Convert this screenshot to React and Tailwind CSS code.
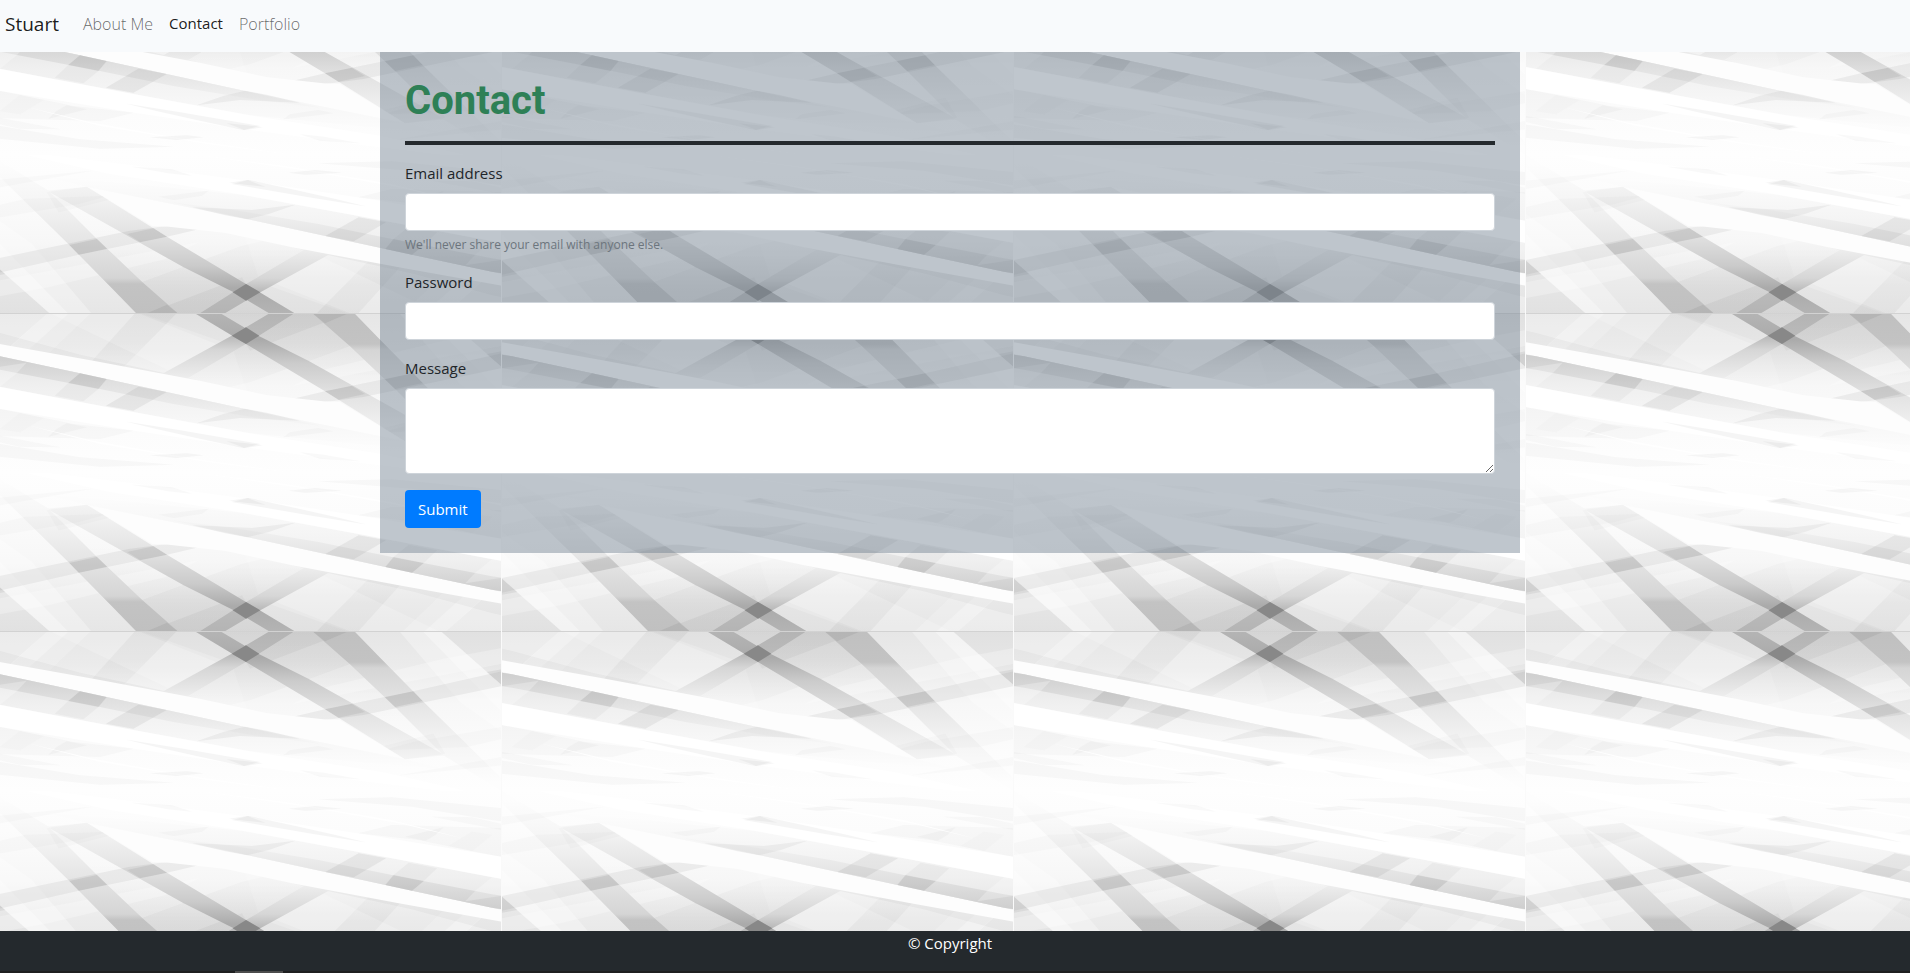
import React from "react";

// One half of the backdrop tile; the other half is the same drawing turned by 180 degrees.
function Facets() {
  return (
    <g clipPath="url(#half)">
      <rect x="-30" y="0" width="1536" height="479" fill="url(#base)" />
      {/* pale facets, left */}
      <path d="M-30 0H140L-30 155Z" fill="#fff" opacity=".2" />
      <path d="M140 0H270L90 170L-30 150Z" fill="#fff" opacity=".4" />
      <path d="M205 0H270L110 150L50 140Z" fill="#000" opacity=".02" />
      <path d="M0 57L240 122L600 200L-30 90V50Z" fill="#000" opacity=".03" />
      <path d="M403 0H528L370 160L272 145Z" fill="url(#shade)" opacity=".18" />
      <path d="M155 0H420L700 110L740 230L560 195Z" fill="#fff" opacity=".18" />
      {/* centre */}
      <path d="M430 0H588L738 90L600 170L560 140L700 95Z" fill="#000" opacity=".02" />
      <path d="M665 0H1065L1130 67L750 205L640 230L560 195L738 90Z" fill="url(#shade)" opacity=".28" />
      <path d="M880 0H1040L750 110L738 90Z" fill="url(#shade)" opacity=".17" />
      <path d="M1130 67L925 140L975 232L1200 300L1268 207Z" fill="url(#shade)" opacity=".14" />
      {/* right side */}
      <path d="M1325 0H1506V160Z" fill="#000" opacity=".02" />
      <path d="M1200 0H1325L1506 160V300L1380 210Z" fill="#fff" opacity=".3" />
      <path d="M1270 0H1325L1506 160V240Z" fill="#fff" opacity=".3" />
      <path d="M1506 48L1330 80L980 165L880 215L1506 95Z" fill="#fff" opacity=".25" />
      {/* crossing bands */}
      <path d="M805 0H880L738 90L560 195L490 178L695 65Z" fill="url(#bandLeft)" />
      <path d="M588 0H665L775 65L925 140L1335 370L1215 382L975 232L738 90Z" fill="url(#band)" />
      <path d="M738 40L778 65L738 90L695 65Z" fill="#888" />
      <path d="M940 0H1065L1130 67L1268 207L1506 440V478L1330 370L1185 225L1050 97Z" fill="url(#bandRight)" />
      <path d="M940 0H1040L975 28Z" fill="#000" opacity=".06" />
      <path d="M1506 118L1240 178L975 232L880 254L970 265L1090 249L1506 162Z" fill="#000" opacity=".05" />
      <path d="M1240 178L1268 207L1185 225L1155 196Z" fill="#000" opacity=".07" />
      <path d="M1055 216L1095 240L1015 257L975 232Z" fill="#000" opacity=".06" />
      <path d="M1460 120L1506 112V160Z" fill="#000" opacity=".06" />
      <path d="M1506 285L1240 330L1150 355L1400 345L1506 320Z" fill="#000" opacity=".015" />
      <path d="M1506 375L1200 430L1506 400Z" fill="#000" opacity=".015" />
      <path d="M1300 305L1120 350L1215 382L1335 365Z" fill="#000" opacity=".015" />
      {/* white sweep */}
      <path d="M-30 85L280 140L600 200L800 243L970 262L1020 264L1215 382L735 285L0 127L-30 120Z" fill="#fdfdfd" />
      {/* streak beneath the sweep */}
      <path d="M-30 122L0 127L240 178L735 285L1215 382L1330 410L1100 392L750 358L380 290L0 218L-30 213Z" fill="url(#streak)" />
      <path d="M-30 122L0 127L240 178L735 285L960 335L760 310L520 270L300 225L0 167L-30 163Z" fill="url(#streakTop)" />
      <path d="M80 146L50 178L0 218L-30 213V163Z" fill="#fff" opacity=".25" />
      <path d="M240 178L320 195L295 225L250 262L165 245L205 207Z" fill="#000" opacity=".03" />
      <path d="M240 178L320 195L295 225L205 207Z" fill="#000" opacity=".06" />
      <path d="M415 218L500 234L400 290L318 275Z" fill="#000" opacity=".06" />
      <path d="M735 284L800 296L900 320L720 312L590 328L670 300Z" fill="#000" opacity=".045" />
      <path d="M955 342L1000 352L850 370L870 355Z" fill="#000" opacity=".02" />
      {/* fine white and grey blades */}
      <path d="M-30 213L380 290L750 358L1150 420L1506 500L1100 450L730 400L400 350L0 285L-30 280Z" fill="#fff" />
      <path d="M0 285L220 330L400 350L300 375L-30 365V280Z" fill="#000" opacity=".02" />
      <path d="M60 297L130 312L60 355L0 345Z" fill="#000" opacity=".012" />
      <path d="M200 328L260 340L145 368L170 345Z" fill="#000" opacity=".025" />
      <path d="M380 323L540 349L780 390L730 402L590 372L470 345Z" fill="#000" opacity=".04" />
      <path d="M680 382L738 388L788 394L735 402Z" fill="#000" opacity=".035" />
      <path d="M900 415L970 422L1080 442L960 434Z" fill="#000" opacity=".025" />
      <path d="M80 333L270 378L560 430L1050 500L620 445L300 390Z" fill="#fff" />
      <path d="M-30 386L0 390L240 430L520 452L300 458L-30 425Z" fill="#000" opacity=".025" />
      <path d="M-30 360L180 400L60 398L-30 378Z" fill="#000" opacity=".02" />
      <path d="M560 418L610 424L530 432L450 424Z" fill="#000" opacity=".03" />
    </g>
  );
}

function Backdrop() {
  return (
    <svg className="absolute inset-0 -z-10 h-full w-full" aria-hidden="true">
      <defs>
        <clipPath id="half">
          <rect x="-30" y="0" width="1536" height="478" />
        </clipPath>
        <linearGradient id="base" x1="0" y1="0" x2="0" y2="1">
          <stop offset="0" stopColor="#e6e6e6" />
          <stop offset=".2" stopColor="#ebebeb" />
          <stop offset=".45" stopColor="#f7f7f7" />
          <stop offset=".75" stopColor="#fcfcfc" />
          <stop offset="1" stopColor="#fefefe" />
        </linearGradient>
        <linearGradient id="shade" gradientUnits="userSpaceOnUse" x1="0" y1="0" x2="0" y2="270">
          <stop offset="0" stopColor="#000" stopOpacity=".26" />
          <stop offset=".3" stopColor="#000" stopOpacity=".22" />
          <stop offset=".65" stopColor="#000" stopOpacity=".08" />
          <stop offset="1" stopColor="#000" stopOpacity="0" />
        </linearGradient>
        <linearGradient id="bandLeft" gradientUnits="userSpaceOnUse" x1="0" y1="0" x2="0" y2="195">
          <stop offset="0" stopColor="#b4b4b4" />
          <stop offset=".35" stopColor="#bababa" />
          <stop offset=".55" stopColor="#d6d6d6" />
          <stop offset="1" stopColor="#eeeeee" />
        </linearGradient>
        <linearGradient id="band" gradientUnits="userSpaceOnUse" x1="0" y1="0" x2="0" y2="385">
          <stop offset="0" stopColor="#b4b4b4" />
          <stop offset=".2" stopColor="#aaaaaa" />
          <stop offset=".38" stopColor="#cbcbcb" />
          <stop offset=".62" stopColor="#e2e2e2" />
          <stop offset="1" stopColor="#f8f8f8" />
        </linearGradient>
        <linearGradient id="bandRight" gradientUnits="userSpaceOnUse" x1="0" y1="0" x2="0" y2="450">
          <stop offset="0" stopColor="#c0c0c0" />
          <stop offset=".2" stopColor="#c3c3c3" />
          <stop offset=".24" stopColor="#d5d5d5" />
          <stop offset=".5" stopColor="#e6e6e6" />
          <stop offset=".75" stopColor="#f5f5f5" />
          <stop offset="1" stopColor="#fdfdfd" />
        </linearGradient>
        <linearGradient id="streak" gradientUnits="userSpaceOnUse" x1="0" y1="122" x2="0" y2="400">
          <stop offset="0" stopColor="#e4e4e4" />
          <stop offset=".35" stopColor="#f0f0f0" />
          <stop offset="1" stopColor="#fcfcfc" />
        </linearGradient>
        <linearGradient id="streakTop" gradientUnits="userSpaceOnUse" x1="0" y1="122" x2="0" y2="330">
          <stop offset="0" stopColor="#cecece" />
          <stop offset=".4" stopColor="#e0e0e0" />
          <stop offset="1" stopColor="#f5f5f5" />
        </linearGradient>
        <pattern id="tile" patternUnits="userSpaceOnUse" x="-10" y="-4" width="512" height="318" viewBox="-30 0 1536 954">
          <Facets />
          <g transform="rotate(180 738 477)">
            <Facets />
          </g>
          <rect x="-30" y="951" width="1536" height="3" fill="#d2d2d2" />
          <rect x="1503" y="0" width="3" height="954" fill="#fafafa" />
        </pattern>
      </defs>
      <rect width="100%" height="100%" fill="url(#tile)" />
    </svg>
  );
}

const control = "block w-full rounded border border-[#ced4da] bg-white px-3 text-[15px] text-[#495057]";

export default function App() {
  return (
    <div className="relative isolate flex min-h-screen flex-col font-['Open_Sans','Noto_Sans',sans-serif] text-[15px] leading-6 text-[#212529]">
      <Backdrop />
      <nav className="flex h-13 items-center bg-[#f8fafc] px-[5px] pb-1">
        <a href="#home" className="mr-6 text-[19px] text-black/90">Stuart</a>
        <div className="flex gap-4 text-base">
          <a href="#about" className="font-light text-black/60">About Me</a>
          <a href="#contact" aria-current="page" className="text-[15px] text-black/90">Contact</a>
          <a href="#portfolio" className="font-light text-black/60">Portfolio</a>
        </div>
      </nav>
      <main className="grow pr-[10px]">
        <section className="mx-auto max-w-[1140px] bg-[rgba(112,128,144,0.45)] p-[25px]">
          <h1 className="font-[Roboto,sans-serif] text-[40px] leading-12 font-bold text-[#2e8056]">Contact</h1>
          <hr className="my-4 border-t-4 border-[#24292d]" />
          <form onSubmit={(e) => e.preventDefault()}>
            <div className="mb-4">
              <label htmlFor="email" className="mb-2 block">Email address</label>
              <input id="email" type="email" aria-describedby="email-help" className={`${control} h-[38px]`} />
              <small id="email-help" className="mt-1 block text-xs leading-[19px] text-[#6c757d]">
                We'll never share your email with anyone else.
              </small>
            </div>
            <div className="mb-4">
              <label htmlFor="password" className="mb-2 block">Password</label>
              <input id="password" type="password" className={`${control} h-[38px]`} />
            </div>
            <div className="mb-4">
              <label htmlFor="message" className="mb-2 block">Message</label>
              <textarea id="message" rows={3} className={`${control} h-[86px] resize-y py-1.5`} />
            </div>
            <button type="submit" className="block h-[38px] rounded bg-[#007bff] px-[13px] text-white">Submit</button>
          </form>
        </section>
      </main>
      <footer className="bg-[#24292d] text-center text-white">
        <p className="h-10 pr-[10px]">© Copyright</p>
        <div className="h-0.5 bg-[#1e1f20] pl-[235px]">
          <div className="h-full w-12 bg-[#4c4c4c]" />
        </div>
      </footer>
    </div>
  );
}
